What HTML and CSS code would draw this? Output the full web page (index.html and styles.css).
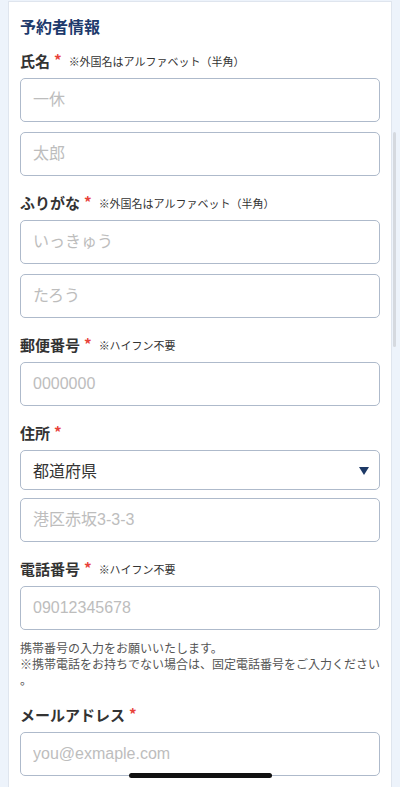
FILE: index.html
```html
<!DOCTYPE html>
<html lang="ja">
<head>
  <meta charset="UTF-8">
  <meta name="viewport" content="width=device-width, initial-scale=1.0">
  <title>予約者情報</title>
  <link rel="stylesheet" href="styles.css">
</head>
<body>
  <main class="card">
    <h2 class="card-title">予約者情報</h2>

    <div class="field">
      <label class="label">氏名<span class="req">*</span><small class="note">※外国名はアルファベット（半角）</small></label>
      <input class="input" type="text" placeholder="一休">
      <input class="input" type="text" placeholder="太郎">
    </div>

    <div class="field">
      <label class="label">ふりがな<span class="req">*</span><small class="note">※外国名はアルファベット（半角）</small></label>
      <input class="input" type="text" placeholder="いっきゅう">
      <input class="input" type="text" placeholder="たろう">
    </div>

    <div class="field">
      <label class="label">郵便番号<span class="req">*</span><small class="note">※ハイフン不要</small></label>
      <input class="input" type="text" placeholder="0000000">
    </div>

    <div class="field">
      <label class="label">住所<span class="req">*</span></label>
      <div class="select-wrap">
        <select class="select">
          <option>都道府県</option>
        </select>
        <svg class="select-arrow" width="10" height="8" viewBox="0 0 10 8"><path d="M0 0H10L5 8Z" fill="#1d3966"/></svg>
      </div>
      <input class="input" type="text" placeholder="港区赤坂3-3-3">
    </div>

    <div class="field">
      <label class="label">電話番号<span class="req">*</span><small class="note">※ハイフン不要</small></label>
      <input class="input" type="tel" placeholder="09012345678">
      <p class="help">携帯番号の入力をお願いいたします。<br>※携帯電話をお持ちでない場合は、固定電話番号をご入力ください。</p>
    </div>

    <div class="field">
      <label class="label">メールアドレス<span class="req">*</span></label>
      <input class="input" type="email" placeholder="you@exmaple.com">
    </div>
  </main>

  <!-- iOS overlays -->
  <div class="scroll-thumb"></div>
  <div class="home-bar"></div>
</body>
</html>
```

FILE: styles.css
```css
* {
  margin: 0;
  padding: 0;
  box-sizing: border-box;
}

body {
  background: #edf3fb;
  font-family: "Liberation Sans", "Noto Sans CJK JP", sans-serif;
  color: #333;
  height: 787px;
  overflow: hidden;
}

/* Card */
.card {
  background: #fff;
  margin: 1px 8px 0;
  border: 1px solid #dfe5ee;
  padding: 12px 11px 40px;
}

.card-title {
  font-family: "Noto Sans CJK JP", sans-serif;
  font-size: 16px;
  line-height: 24px;
  font-weight: 700;
  color: #1d3a6c;
  margin-bottom: 12px;
}

/* Fields */
.field {
  display: flex;
  flex-direction: column;
  gap: 10px;
}

.field + .field {
  margin-top: 16px;
}

.label {
  display: flex;
  align-items: center;
  font-family: "Noto Sans CJK JP", sans-serif;
  font-size: 15px;
  line-height: 22px;
  font-weight: 700;
  color: #333;
  margin-bottom: -4px;
}

.req {
  color: #e8423a;
  font-size: 15px;
  margin-left: 4px;
  position: relative;
  top: -1px;
}

.note {
  font-family: "Noto Sans CJK JP", sans-serif;
  font-size: 11px;
  font-weight: 400;
  color: #333;
  margin-left: 7px;
}

.input,
.select {
  display: block;
  width: 100%;
  height: 44px;
  border: 1px solid #aebacb;
  border-radius: 5px;
  padding: 0 12px;
  font-family: "Liberation Sans", "Noto Sans CJK JP", sans-serif;
  font-size: 16px;
  color: #333;
  background: #fff;
  outline: none;
}

.input::placeholder {
  color: #bdbdbd;
}

.select-wrap {
  position: relative;
  margin-bottom: -2px;
}

.select {
  height: 40px;
  appearance: none;
  -webkit-appearance: none;
  font-family: "Noto Sans CJK JP", sans-serif;
  color: #333;
}

.select-arrow {
  position: absolute;
  right: 11px;
  top: 17px;
}

.help {
  font-family: "Noto Sans CJK JP", sans-serif;
  font-size: 12px;
  line-height: 16px;
  color: #555;
  line-break: anywhere;
}

/* Overlays */
.scroll-thumb {
  position: absolute;
  left: 393px;
  top: 132px;
  width: 3px;
  height: 215px;
  border-radius: 2px;
  background: #d5d9df;
}

.home-bar {
  position: absolute;
  left: 129px;
  top: 773px;
  width: 143px;
  height: 5px;
  border-radius: 3px;
  background: #111;
}
```
